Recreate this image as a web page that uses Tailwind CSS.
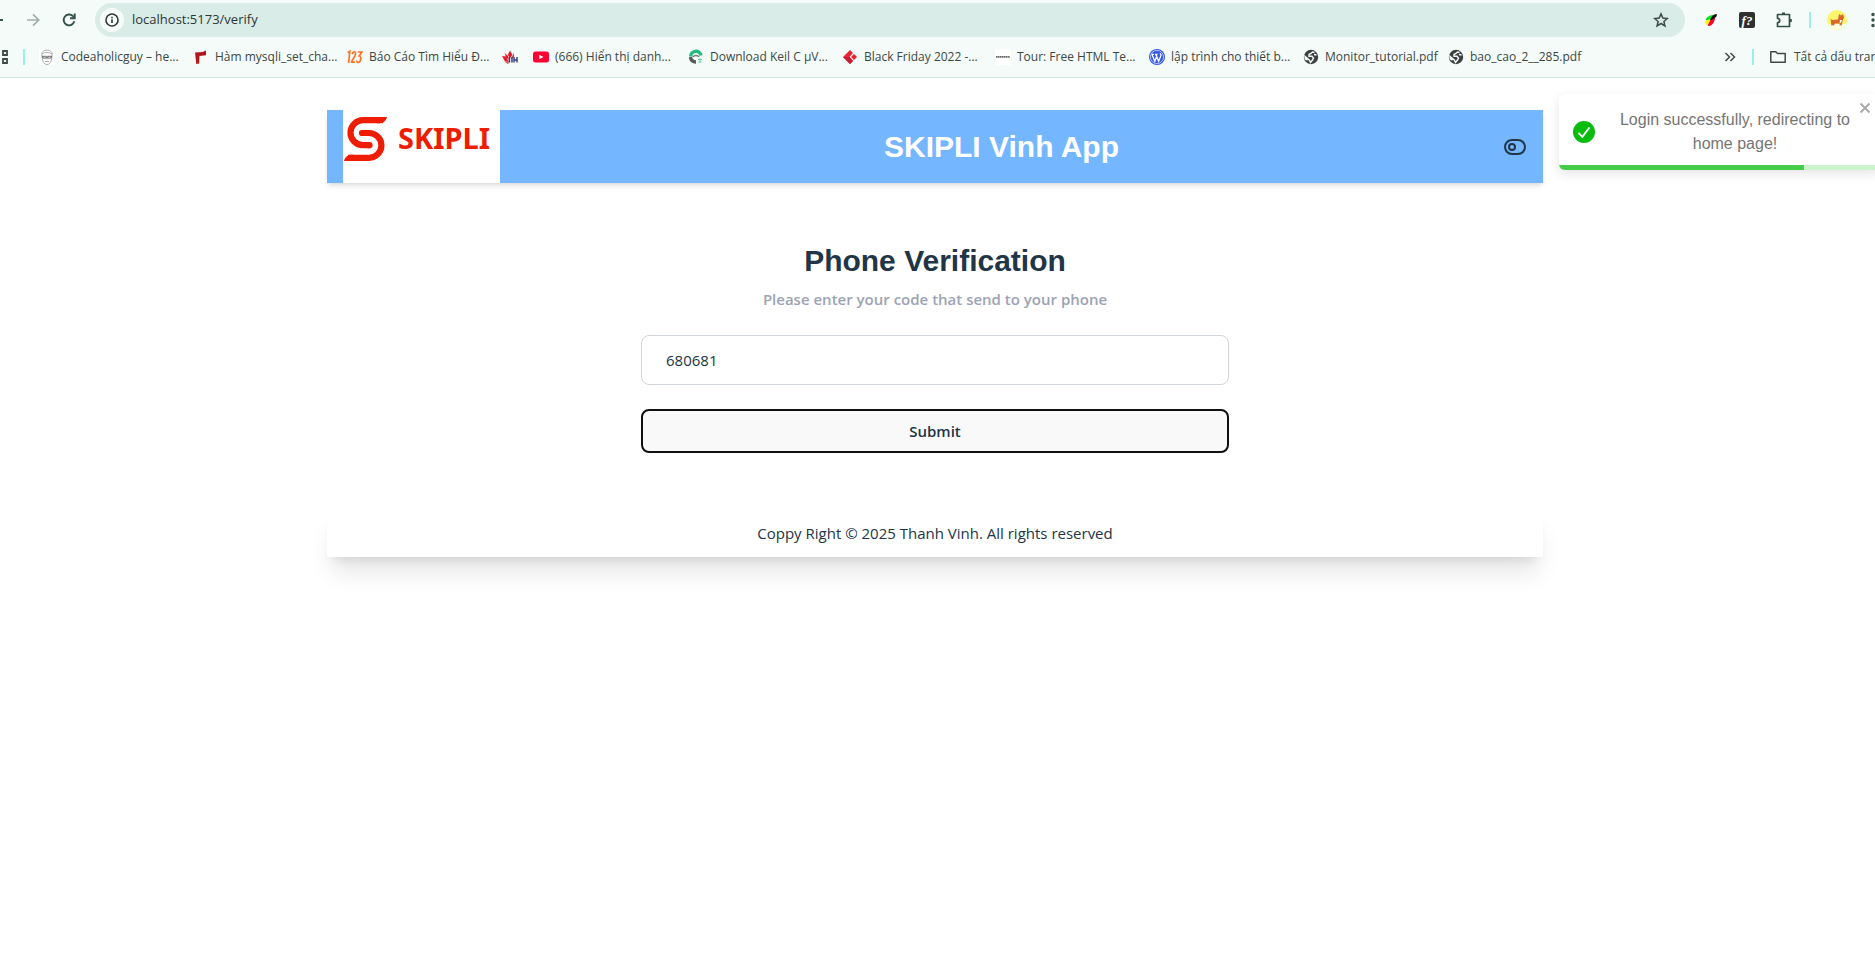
<!DOCTYPE html>
<html lang="vi">
<head>
<meta charset="utf-8">
<meta name="viewport" content="width=device-width, initial-scale=1">
<title>SKIPLI Vinh App</title>
<script src="https://cdn.jsdelivr.net/npm/@tailwindcss/browser@4"></script>
</head>
<body class="min-h-screen overflow-x-hidden bg-white font-['Open_Sans','Noto_Sans',sans-serif] text-[15px] text-[#213547]">

<div class="border-b border-[#d3e5df] bg-[#f4fbf8] text-[#3c4744]">
  <!-- Toolbar -->
  <div class="flex h-10 items-center overflow-hidden">
    <button aria-label="Back" class="w-[22px] shrink-0"><svg class="block h-4 w-4" viewBox="0 0 16 16" fill="none" stroke="#3b5650" stroke-width="2"><path d="M0 8h3"/></svg></button>
    <button aria-label="Forward" class="flex w-[22px] shrink-0 justify-center"><svg class="h-4 w-4" viewBox="0 0 16 16" fill="none" stroke="#a3aeab" stroke-width="1.7"><path d="M2 8h11.500M8 2.300 13.700 8 8 13.700"/></svg></button>
    <button aria-label="Reload" class="ml-4 mr-[17px] flex w-[18px] shrink-0 justify-center"><svg class="h-4 w-4" viewBox="0 0 16 16" fill="none" stroke="#34504a" stroke-width="1.900"><path d="M13.300 9.300A5.400 5.400 0 1 1 12 4.200l1.500 1.500"/><path d="M13.700 1.500v4.700H9"/></svg></button>
    <div class="flex h-[34px] flex-1 items-center rounded-full bg-[#daece7] pl-[5px] pr-4">
      <button aria-label="Site information" class="flex h-6 w-6 items-center justify-center rounded-full bg-[#f7fcfa]"><svg class="h-4 w-4" viewBox="0 0 16 16" fill="none" stroke="#303735" stroke-width="1.600"><circle cx="8" cy="8" r="6"/><path d="M8 7.300v3.700M8 4.700v1.500"/></svg></button>
      <label for="url" class="sr-only">Address</label>
      <input id="url" class="ml-2 min-w-0 flex-1 bg-transparent text-[13px] text-[#2c3634] outline-none" value="localhost:5173/verify">
      <button aria-label="Bookmark"><svg class="h-4 w-4" viewBox="0 0 16 16" fill="none" stroke="#3e4a47" stroke-width="1.500"><path d="m8 1.900 1.800 4.200 4.500.4-3.400 3 1 4.400L8 11.500l-3.900 2.400 1-4.400-3.400-3 4.500-.4z"/></svg></button>
    </div>
    <div class="flex shrink-0 items-center pl-[18px]">
      <button aria-label="Color picker extension"><svg class="h-4 w-4" viewBox="0 0 16 16"><circle cx="8" cy="8" r="8" fill="#fff"/><path d="M2.500 8C3 5 7 3 11 3l-4 6z" fill="#00e81e"/><path d="M2 9.500 7 7l1 2-4 4c-1-.5-2-2-2-3.500z" fill="#fdf500"/><path d="M4.500 13.500 8 7l4-2c0 4-2 8-5.500 9z" fill="#ff0026"/><path d="M7 8.500C8 5 10 2 13.500 2 15 4 12 6.500 7 8.500z" fill="#111"/></svg></button>
      <button aria-label="Font extension" class="ml-5 h-4 w-4 rounded-xs bg-[#303030] text-center font-['Liberation_Serif',serif] text-[13px] leading-[15px] font-bold text-white italic">f?</button>
      <button aria-label="Extensions" class="ml-5"><svg class="h-[18px] w-[18px]" viewBox="0 0 18 18" fill="none" stroke="#34504a" stroke-width="1.700" stroke-linejoin="round"><path d="M2.500 3.500h12v12h-12v-3.800a2.200 2.200 0 0 0 0-4.400z"/><path d="M7 2.600h3M15.600 8v3" stroke-width="2.400"/></svg></button>
      <span class="ml-4 h-4 w-0.5 bg-[#98f2e5]"></span>
      <button aria-label="Profile" class="ml-4"><svg class="h-5 w-5" viewBox="0 0 20 20"><circle cx="10" cy="10" r="10" fill="#fdf56c"/><path d="M1 14h18a10 10 0 0 1-18 0z" fill="#fffde0"/><path d="M3.500 8.500 5 10l6-.5 1-5.500 2 1.500L16 4l1 3.500-1.500 3.500-1 5H13l-.7-2.500H8L6.500 16H4.300L4 12z" fill="#d9662c"/><path d="M13 10h2l-1 2.500-1.500 1zM4.300 15.300h2v.7h-2zM13 15.300h1.700v.7H13z" fill="#fff"/></svg></button>
      <button aria-label="Menu" class="ml-6 w-1"><svg class="h-4 w-1" viewBox="0 0 4 16" fill="#34504a"><circle cx="2" cy="2.500" r="1.700"/><circle cx="2" cy="8" r="1.700"/><circle cx="2" cy="13.500" r="1.700"/></svg></button>
    </div>
  </div>

  <!-- Bookmarks -->
  <nav class="flex h-[37px] items-center overflow-hidden pb-1 text-[12px] whitespace-nowrap">
    <button aria-label="Apps" class="w-[23px] shrink-0"><svg class="h-4 w-2" viewBox="0 0 8 16" fill="none" stroke="#3e4a47" stroke-width="1.800"><path d="M3 2h4v4H3zM3 10h4v4H3z"/></svg></button>
    <span class="h-4 w-0.5 shrink-0 bg-[#98f2e5]"></span>
    <a href="#" class="ml-[14px] flex w-[154px] shrink-0 items-center gap-1.5"><svg class="h-4 w-4" viewBox="0 0 16 16" fill="none" stroke="#8b8b8b" stroke-width=".7"><path fill="#fff" stroke="none" d="M0 0h16v16H0z"/><path d="M3 7C2 3 5 1 8 1s6 2 5 6l-.6 4c-.8 3-2.500 4.500-4.400 4.500S4.400 14 3.600 11zM3 5c3-2 7-2 10 0M6 12.500h4M8 8v2.500"/><path stroke="#333" d="M3.500 7.300h3.800v1.800H4zM8.700 7.300h3.800L12 9.100H8.700z"/></svg>Codeaholicguy – he...</a>
    <a href="#" class="flex w-[154px] shrink-0 items-center gap-1.5"><svg class="h-4 w-4" viewBox="0 0 16 16" fill="#b3161b"><path d="m2 3.500 7.500-.5L13 1.500v4.700L6.500 7l-.3 7.500L3.300 15z"/></svg>Hàm mysqli_set_cha...</a>
    <a href="#" class="flex w-[155px] shrink-0 items-center gap-1.5"><svg class="h-4 w-4" viewBox="0 0 16 16" fill="none" stroke="#ff7425" stroke-width="1.700"><path d="m.8 3.800 2-1.500L1.600 14M5.300 5c.5-3 3.700-3 3.200.2-.4 2.800-2.600 4-3.900 8h3.300M10.800 3H15l-2.800 4c3 .5 1.500 6.500-1 6.500-1 0-1.500-.8-1.300-2"/></svg>Báo Cáo Tìm Hiểu Đ...</a>
    <a href="#" aria-label="IUH" class="w-[31px] shrink-0"><svg class="h-4 w-4" viewBox="0 0 16 16"><path d="M8 1.500 10.500 6 8 9 5.700 6zM0 7l4 .5L7 13l-4-.5zM2.500 4 6 7l1 4-3-3zM12 4v4l-3 2zM3 13l4 .5-1 1.500z" fill="#e11f2d"/><path d="M7.500 8v5.500M10 8v5.500M12 8v5.500M15 8v5.500M12 11h3" fill="none" stroke="#303a7d" stroke-width="1.400"/></svg></a>
    <a href="#" class="flex w-[155px] shrink-0 items-center gap-1.5"><svg class="h-4 w-4" viewBox="0 0 16 16"><rect y="2.500" width="16" height="11" rx="2.500" fill="#ff0233"/><path d="m6.300 5.700 4.200 2.300-4.200 2.300z" fill="#fff"/></svg>(666) Hiển thị danh...</a>
    <a href="#" class="flex w-[154px] shrink-0 items-center gap-1.5"><svg class="h-4 w-4" viewBox="0 0 16 16" fill="none"><path d="M2.700 7.500a5.200 5.200 0 0 1 10.300-1" stroke="#22bb7e" stroke-width="3.400"/><path d="M2.500 8c.3 3 2.500 5 5.500 5" stroke="#565c5a" stroke-width="3.400"/><path d="M5 8c1-2 5-2 6 0" stroke="#777" stroke-width="1.500"/><path d="M10 10.500h4M10.500 13h3M12 9v5" stroke="#69cfa5"/></svg>Download Keil C µV...</a>
    <a href="#" class="flex w-[153px] shrink-0 items-center gap-1.5"><svg class="h-4 w-4" viewBox="0 0 16 16"><path d="m8 1 3 3-3.500 4 3.500 4-3 3-7-7z" fill="#ea2430"/><path d="m1 8 6.500 0L11 12l-3 3z" fill="#c81b36"/><path d="m12 5 3 3-3 3-3-3z" fill="#ee2229"/></svg>Black Friday 2022 -...</a>
    <a href="#" class="flex w-[154px] shrink-0 items-center gap-1.5"><svg class="h-4 w-4" viewBox="0 0 16 16"><path fill="#fff" d="M0 0h16v16H0z"/><path d="M1 7.800h14" stroke="#666" stroke-width="1.800" stroke-dasharray="1.500 .4"/></svg>Tour: Free HTML Te...</a>
    <a href="#" class="flex w-[154px] shrink-0 items-center gap-1.5"><svg class="h-4 w-4" viewBox="0 0 16 16" fill="none" stroke="#fff"><circle cx="8" cy="8" r="8" fill="#3858e9" stroke="none"/><circle cx="8" cy="8" r="6.600" stroke-width=".6"/><path stroke-width="1.300" d="m3 5.500 2.800 6.800L8 6.500M6.800 5.300l2.800 7 2.500-6-1-2M2.500 5.300h2.500M6 5.300h2.500"/></svg>lập trình cho thiết b...</a>
    <a href="#" class="flex w-[145px] shrink-0 items-center gap-1.5"><svg class="h-4 w-4" viewBox="0 0 16 16"><circle cx="8" cy="8" r="7.200" fill="#3d4043"/><path d="M11.500 3.500 9.500 3 8 4.500l-2 1v1.800h3L10.500 9l-1 2-2 2.500L6.300 11 2 7.500l.3 2.500 2.200 1M11 5.500l2.500.5" fill="none" stroke="#f4fbf8" stroke-width="1.400"/></svg>Monitor_tutorial.pdf</a>
    <a href="#" class="flex shrink-0 items-center gap-1.5"><svg class="h-4 w-4" viewBox="0 0 16 16"><circle cx="8" cy="8" r="7.200" fill="#3d4043"/><path d="M11.500 3.500 9.500 3 8 4.500l-2 1v1.800h3L10.500 9l-1 2-2 2.500L6.300 11 2 7.500l.3 2.500 2.200 1M11 5.500l2.500.5" fill="none" stroke="#f4fbf8" stroke-width="1.400"/></svg>bao_cao_2__285.pdf</a>
    <div class="ml-auto flex w-[151px] shrink-0 items-center">
      <button aria-label="More bookmarks" class="shrink-0"><svg class="h-3 w-3" viewBox="0 0 12 12" fill="none" stroke="#3e4a47" stroke-width="1.500"><path d="m1.500 2 4 4-4 4M6.500 2l4 4-4 4"/></svg></button>
      <span class="ml-4 h-4 w-0.5 shrink-0 bg-[#98f2e5]"></span>
      <button class="ml-4 flex shrink-0 items-center gap-2"><svg class="h-4 w-4" viewBox="0 0 16 16" fill="none" stroke="#3e4a47" stroke-width="1.500" stroke-linejoin="round"><path d="M.8 2.800h5L7.500 4.500h7.700v8.700H.8z"/></svg>Tất cả dấu trang</button>
    </div>
  </nav>
</div>

<!-- Page -->
<div class="relative pr-[5px]">
  <div class="mx-auto max-w-7xl p-8">
    <header class="flex h-[73px] items-center justify-between bg-[#74b6ff] px-4 shadow-md">
      <a href="#" aria-label="SKIPLI" class="flex h-full w-[157px] items-start bg-white pt-[7px]">
        <svg class="ml-px h-11 w-11 shrink-0" viewBox="0 0 44 44" fill="none" stroke="#ee1c00" stroke-width="6.200"><path d="M39 3.200H19a12.500 12.500 0 0 0 0 25h6.500"/><path d="M18 16h7a12.400 12.400 0 0 1 0 24.800H4"/><circle cx="25.500" cy="28.200" r="3.100" fill="#ee1c00" stroke="none"/><circle cx="18" cy="16" r="3.100" fill="#ee1c00" stroke="none"/><path d="M33 .1h10C42 4 39.500 6.300 35 6.300h-2zM10 37.700v6.200H0c1-4 4-6.200 8-6.200z" fill="#ee1c00" stroke="none"/></svg>
        <span class="ml-2.5 pt-[3px] font-['Noto_Sans',sans-serif] text-[29px] leading-9 font-bold text-[#ee1c00]">SKIPLI</span>
      </a>
      <h1 class="font-['Liberation_Sans',sans-serif] text-3xl font-bold text-white">SKIPLI Vinh App</h1>
      <button aria-label="Toggle theme"><svg class="block h-6 w-6" viewBox="0 0 24 24" fill="none" stroke="#213547" stroke-width="2"><rect x="2" y="5" width="20" height="14" rx="7"/><circle cx="9" cy="12" r="3"/></svg></button>
    </header>

    <main class="mx-auto flex max-w-[588px] flex-col pt-[60px] pb-14 text-center">
      <h2 class="font-['Liberation_Sans',sans-serif] text-3xl font-bold">Phone Verification</h2>
      <p class="mt-2 leading-6 font-semibold text-[#9ca3b4]">Please enter your code that send to your phone</p>
      <form class="mt-6 flex flex-col gap-6">
        <label for="code" class="sr-only">Verification code</label>
        <input id="code" class="h-[50px] w-full rounded-lg border border-gray-300 bg-white px-6 outline-none" value="680681">
        <button type="button" class="h-11 rounded-lg border-2 border-[#101010] bg-[#f9f9f9] font-semibold">Submit</button>
      </form>
    </main>

    <footer class="bg-white p-3 text-center leading-6 shadow-xl">Coppy Right © 2025 Thanh Vinh. All rights reserved</footer>
  </div>

  <!-- Toast -->
  <div role="alert" class="absolute top-4 -right-1 flex h-[76px] w-80 items-center overflow-hidden rounded-md bg-white pr-6 pl-3.5 font-['Liberation_Sans',sans-serif] text-base text-[#757575] shadow-[0_4px_12px_rgba(0,0,0,0.1)]">
    <svg class="h-[22px] w-[22px] shrink-0" viewBox="0 0 22 22"><circle cx="11" cy="11" r="11" fill="#07bc0c"/><path d="m5.500 11.800 3.800 4L16.500 6.500" fill="none" stroke="#fff" stroke-width="1.900"/></svg>
    <p class="flex-1 pl-5 text-center">Login successfully, redirecting to home page!</p>
    <button aria-label="Close" class="absolute top-2 right-2"><svg class="h-3 w-3" viewBox="0 0 12 12" fill="none" stroke="#aaa" stroke-width="2"><path d="m1.500 1.500 9 9M10.500 1.500l-9 9"/></svg></button>
    <div class="absolute inset-x-0 bottom-0 h-[5px] bg-[#cdf2ce]"><div class="h-full bg-[#45cc48]" style="width:76.600%"></div></div>
  </div>
</div>
</body>
</html>
